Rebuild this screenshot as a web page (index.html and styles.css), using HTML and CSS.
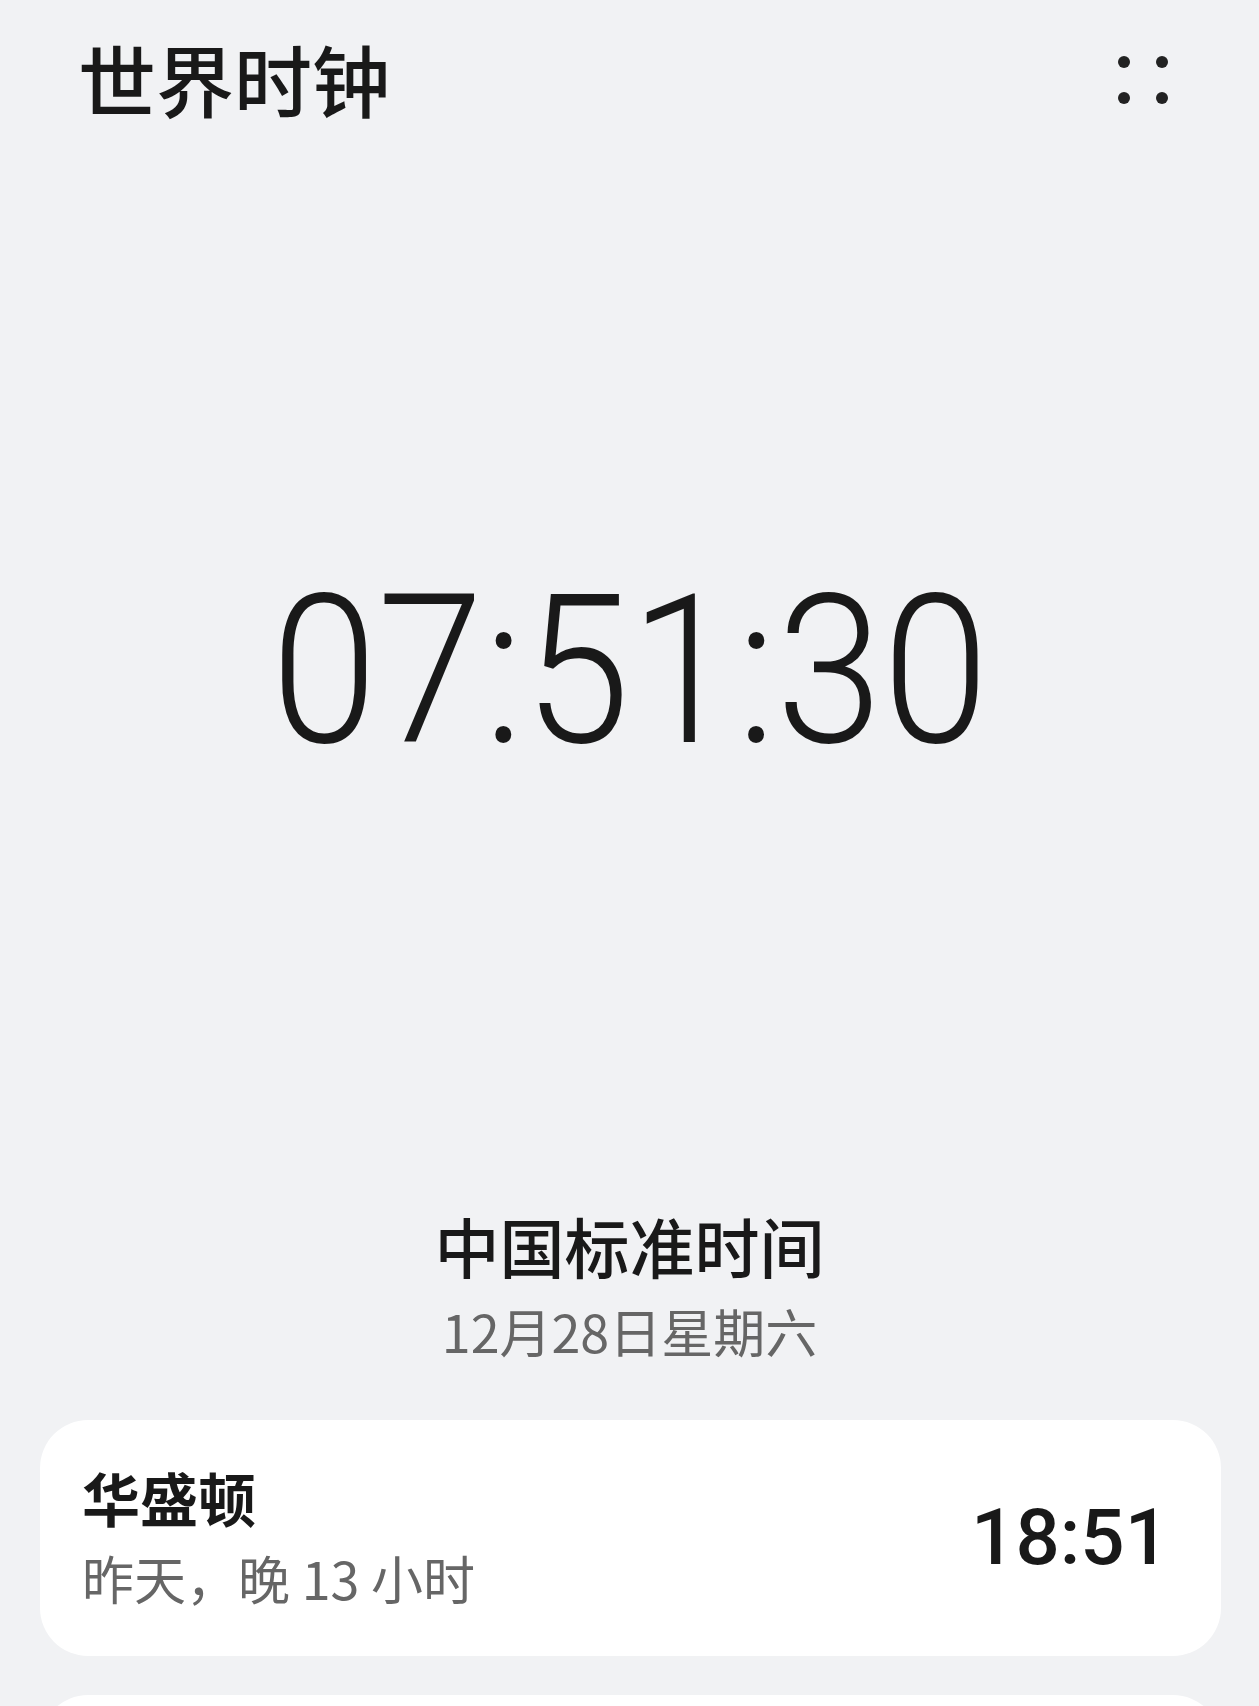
FILE: index.html
```html
<!DOCTYPE html>
<html lang="zh-CN">
<head>
<meta charset="utf-8">
<title>世界时钟</title>
<link rel="stylesheet" href="styles.css">
</head>
<body>
<div class="page">
  <header class="header">
    <h1 class="title">世界时钟</h1>
    <button class="menu" aria-label="更多">
      <svg width="60" height="60" viewBox="0 0 60 60">
        <circle cx="11" cy="12" r="6" fill="#222"/>
        <circle cx="49" cy="12" r="6" fill="#222"/>
        <circle cx="11" cy="48" r="6" fill="#222"/>
        <circle cx="49" cy="48" r="6" fill="#222"/>
      </svg>
    </button>
  </header>
  <section class="local">
    <div class="big-time">07:51:30</div>
    <div class="zone">中国标准时间</div>
    <div class="date">12月28日星期六</div>
  </section>
  <section class="list">
    <div class="card">
      <div class="city-info">
        <div class="city">华盛顿</div>
        <div class="diff">昨天，晚 13 小时</div>
      </div>
      <div class="city-time">18:51</div>
    </div>
    <div class="card card-next"></div>
  </section>
</div>
</body>
</html>
```
FILE: styles.css
```css
html, body {
  margin: 0;
  padding: 0;
}
body {
  background: #f1f2f4;
  font-family: "Noto Sans CJK SC", "Noto Sans", sans-serif;
  color: #191919;
  overflow: hidden;
}
.page {
  width: 1259px;
  height: 1706px;
  overflow: hidden;
  display: flex;
  flex-direction: column;
}
.page > * {
  flex-shrink: 0;
}
.header {
  height: 160px;
  display: flex;
  align-items: center;
  justify-content: space-between;
  padding: 0 86px 0 78px;
}
.title {
  margin: 0 0 5px 0;
  font-size: 78px;
  font-weight: 500;
  line-height: 1;
  letter-spacing: 0;
}
.menu {
  border: 0;
  background: none;
  padding: 0;
  width: 60px;
  height: 60px;
  display: block;
}
.menu svg {
  display: block;
}
.local {
  display: flex;
  flex-direction: column;
  align-items: center;
}
.big-time {
  margin-top: 408px;
  font-family: Roboto, "Noto Sans", sans-serif;
  font-weight: 300;
  font-size: 207px;
  line-height: 207px;
  transform: scaleX(0.925);
  color: #191919;
}
.zone {
  margin-top: 431px;
  font-size: 65px;
  font-weight: 500;
  line-height: 78px;
}
.date {
  margin-top: 17px;
  font-size: 52px;
  line-height: 60px;
  color: #666;
}
.list {
  margin-top: 59px;
  padding: 0 38px 0 40px;
  display: flex;
  flex-direction: column;
  gap: 39px;
}
.card {
  background: #fff;
  border-radius: 48px;
  height: 236px;
  box-sizing: border-box;
  padding: 42px 52px 0 42px;
  display: flex;
  justify-content: space-between;
  flex-shrink: 0;
}
.city-info {
  display: flex;
  flex-direction: column;
  gap: 17px;
}
.city {
  font-size: 58px;
  font-weight: 700;
  line-height: 70px;
}
.diff {
  font-size: 52px;
  line-height: 58px;
  color: #666;
}
.city-time {
  align-self: center;
  margin-top: -42px;
  font-family: Roboto, "Noto Sans", sans-serif;
  font-weight: 500;
  font-size: 78px;
  line-height: 1;
}
```
